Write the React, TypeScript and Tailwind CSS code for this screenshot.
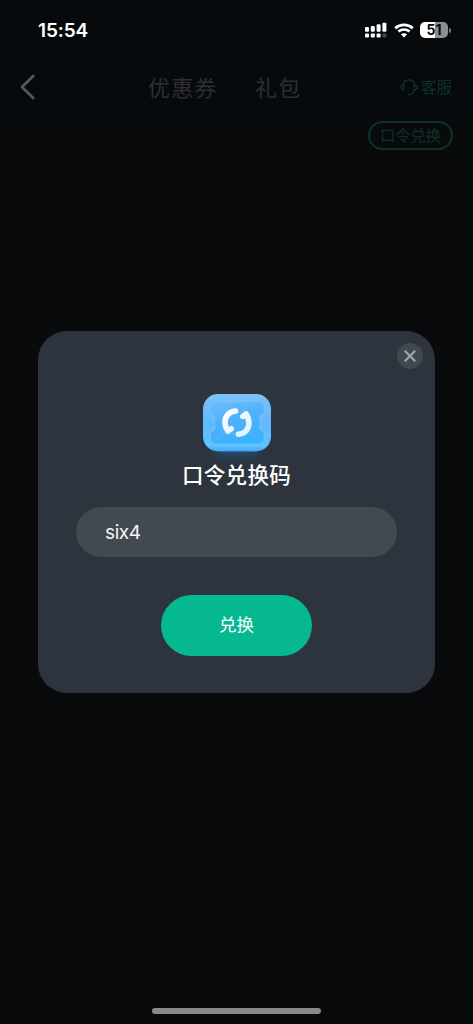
import React from 'react'

const SignalIcon = () => (
  <svg width="22" height="16" viewBox="0 0 22 16" fill="#fff">
    <rect x="0" y="5" width="4" height="4.8" rx="1.1" />
    <rect x="5.8" y="4" width="4" height="5.8" rx="1.1" />
    <rect x="11.6" y="2.3" width="4" height="7.5" rx="1.1" />
    <rect x="17.4" y="0.7" width="4" height="9.1" rx="1.1" />
    <rect x="0" y="11.4" width="4" height="4" rx="1.2" />
    <rect x="5.8" y="11.4" width="4" height="4" rx="1.2" />
    <rect x="11.6" y="11.4" width="4" height="4" rx="1.2" />
    <rect x="17.4" y="11.4" width="4" height="4" rx="1.2" opacity="0.25" />
  </svg>
)

const WifiIcon = () => (
  <svg width="20" height="15" viewBox="0 0 20 15" fill="none" stroke="#fff">
    <path d="M1.2 5.2C6.2 0.7 13.8 0.7 18.8 5.2" strokeWidth="2.7" />
    <path d="M4.4 8.6C7.6 5.8 12.4 5.8 15.6 8.6" strokeWidth="2.6" />
    <path d="M10 14.4L6.9 11.3C8.7 9.8 11.3 9.8 13.1 11.3Z" fill="#fff" stroke="none" />
  </svg>
)

const HeadsetIcon = () => (
  <svg width="18" height="17" viewBox="0 0 18 17" fill="none" stroke="currentColor" strokeWidth="1.3" strokeLinecap="round" strokeLinejoin="round">
    <path d="M3.6 5.8C3.800 2.900 6 1 9 1s5.200 1.900 5.400 4.800v4.400c-.2 2.600-1.600 4.300-3.600 5.300H8.500" />
    <path d="M3.600 5.800c-1.600.2-2.600 1-2.600 2.600s1 2.500 2.600 2.600z" />
    <path d="M14.400 5.800c1.600.2 2.600 1 2.600 2.600s-1 2.500-2.600 2.600" />
  </svg>
)

// blue ticket badge with the exchange arrows
const TicketIcon = () => (
  <svg width="68" height="58" viewBox="0 0 68 58" fill="none">
    <defs>
      <linearGradient id="base" x1="0" y1="0" x2="0" y2="1">
        <stop offset="0" stopColor="#7cc2fc" />
        <stop offset="0.5" stopColor="#62b9fc" />
        <stop offset="0.9" stopColor="#60c2ff" />
        <stop offset="1" stopColor="#40a5f8" />
      </linearGradient>
      <linearGradient id="ticket" x1="0" y1="0" x2="0.3" y2="1">
        <stop offset="0" stopColor="#6fbcfb" />
        <stop offset="0.5" stopColor="#4fb0fb" />
        <stop offset="1" stopColor="#3ab2fe" />
      </linearGradient>
      <linearGradient id="arrow" gradientUnits="userSpaceOnUse" x1="20" y1="15" x2="48" y2="42">
        <stop offset="0" stopColor="#ffffff" />
        <stop offset="1" stopColor="#dceeff" />
      </linearGradient>
    </defs>
    <rect width="68" height="57.500" rx="15" fill="url(#base)" />
    <path
      d="M12 7.500H56Q61 7.500 61 12.500V19Q56.500 21.500 56.500 24.500Q56.500 26.500 57.500 28.500Q56.500 31 56.500 33Q56.500 36 61 38.500V45Q61 50 56 50H12Q7.500 50 7.500 45V38.500Q12 36 12 33Q12 31 11 28.500Q12 26.500 12 24.500Q12 21.500 7.500 19V12.500Q7.500 7.500 12 7.500Z"
      fill="url(#ticket)"
      stroke="#8bcbff"
      strokeOpacity="0.45"
    />
    <path d="M8.500 49L20 40H48L60 49" stroke="#8bcbff" strokeOpacity="0.3" />
    <g stroke="url(#arrow)" strokeWidth="5.600" strokeLinecap="round" strokeLinejoin="round">
      <path d="M32.500 17C26.500 17.500 22 22 22 28C22 31.500 23 34.300 25 37L28.200 34.800" />
      <path d="M35.500 40.300C41.500 39.800 46 35.300 46 29.300C46 25.800 45 22.800 43 20L39.800 22.400" />
    </g>
  </svg>
)

const StatusBar = () => (
  <div className="flex h-[60px] items-center justify-between pl-[38px] pr-[22px]">
    <div className="font-['Inter'] text-[19px] font-semibold leading-none tracking-[-0.1px] text-white">15:54</div>
    <div className="flex items-center">
      <SignalIcon />
      <div className="ml-[7px] mr-[6px]">
        <WifiIcon />
      </div>
      <div className="flex h-4 w-7 items-center justify-center rounded-[5px] bg-[linear-gradient(90deg,#fff_52%,#8c8d8e_52%)] font-['Inter'] text-[14px] font-bold leading-none text-[#08090b]">
        51
      </div>
      <div className="ml-px h-[5px] w-[2px] rounded-r-full bg-[#77787a]"></div>
    </div>
  </div>
)

const NavBar = () => (
  <div className="grid h-14 grid-cols-[148px_1fr_auto] items-center pb-[2px] pr-[21px]">
    <button className="pl-5">
      <svg width="15" height="26" viewBox="0 0 15 26" fill="none" stroke="#58595b" strokeWidth="2.600" strokeLinecap="round" strokeLinejoin="round">
        <path d="M13.200 2L2 13L13.200 24" />
      </svg>
    </button>
    <div className="flex gap-[37px] pb-[3px] text-[22px] leading-none tracking-[1.3px] text-[#2d2e31]">
      <span>优惠券</span>
      <span>礼包</span>
    </div>
    <div className="flex items-center gap-[3px] text-[15.500px] leading-none text-[#0b3229]">
      <HeadsetIcon />
      <span className="pb-px">客服</span>
    </div>
  </div>
)

const RedeemDialog = () => (
  <div className="relative mx-[38px] mt-[181px] flex h-[362px] flex-col items-center rounded-[29px] bg-[#2d343e] pt-[63px]">
    <button className="absolute right-3 top-3 flex size-[26px] items-center justify-center rounded-full bg-[#42484f]">
      <svg width="12" height="12" viewBox="0 0 12 12" stroke="#a3a7ab" strokeWidth="2" strokeLinecap="round">
        <path d="M1.300 1.300L10.700 10.700M10.700 1.300L1.300 10.700" />
      </svg>
    </button>
    <div className="rounded-[15px] shadow-[0_16px_12px_-14px_#1c598a]">
      <TicketIcon />
    </div>
    <div className="mt-[10px] text-[21.500px] font-medium leading-[24px] tracking-[0.3px] text-white">口令兑换码</div>
    <div className="mt-[21px] flex h-[50px] w-[321px] items-center rounded-full bg-[#434950] pl-[29px] pt-[2px] font-['Inter'] text-[19px] tracking-[-0.4px] text-[#f4f5f6]">
      six4
    </div>
    <button className="mt-[38px] flex h-[61px] w-[151px] items-center justify-center rounded-full bg-[#05b890] pb-[3px] text-[17.500px] leading-none text-white">
      兑换
    </button>
  </div>
)

const App = () => {
  return (
    <div className="flex h-screen w-full flex-col bg-[#090a0c] font-['Noto_Sans_CJK_SC',sans-serif]">
      <div className="bg-[#070a0d]">
        <StatusBar />
        <NavBar />
      </div>
      <div className="flex justify-end pr-5 pt-[5px]">
        <button className="flex h-[29px] w-[85px] items-center justify-center rounded-full border-2 border-[#0b3229] pb-[2px] text-[15.300px] leading-none text-[#0b3229]">
          口令兑换
        </button>
      </div>
      <RedeemDialog />
      <div className="mt-auto mb-[10px] h-[6px] w-[169px] self-center rounded-full bg-[#88898b]"></div>
    </div>
  )
}

export default App
